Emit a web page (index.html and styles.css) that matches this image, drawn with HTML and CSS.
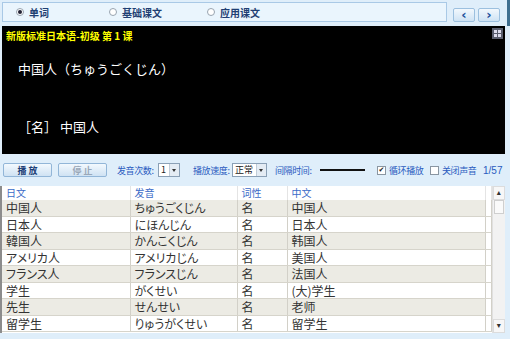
FILE: index.html
```html
<!DOCTYPE html>
<html lang="zh">
<head>
  <meta charset="UTF-8">
  <title>新版标准日本语 单词</title>
  <link rel="stylesheet" href="styles.css">
</head>
<body>
<div class="app">

  <!-- tabs + paging -->
  <div class="topbar">
    <div class="tabs">
      <label class="tab"><span class="radio on"></span>单词</label>
      <label class="tab"><span class="radio"></span>基础课文</label>
      <label class="tab"><span class="radio"></span>应用课文</label>
    </div>
    <div class="nav">
      <button class="navbtn">&lsaquo;</button>
      <button class="navbtn">&rsaquo;</button>
    </div>
  </div>

  <!-- black display -->
  <div class="screen">
    <div class="title">新版标准日本语-初级 第 1 课</div>
    <div class="word">中国人（ちゅうごくじん）</div>
    <div class="meaning">［名］ 中国人</div>
    <span class="fullscreen">
      <svg width="9" height="9" viewBox="0 0 9 9"><rect x="1" y="1" width="3" height="3" fill="#dde"/><rect x="5" y="1" width="3" height="3" fill="#dde"/><rect x="1" y="5" width="3" height="3" fill="#dde"/><rect x="5" y="5" width="3" height="3" fill="#dde"/></svg>
    </span>
  </div>

  <!-- playback controls -->
  <div class="controls">
    <button class="btn">播 放</button>
    <button class="btn off">停 止</button>
    <span class="lbl l-times">发音次数:</span>
    <span class="select w-times">1<i class="arrow"></i></span>
    <span class="lbl l-speed">播放速度:</span>
    <span class="select w-speed">正常<i class="arrow"></i></span>
    <span class="lbl l-gap">间隔时间:</span>
    <span class="slider"></span>
    <label class="check"><span class="box on">&#10004;</span>循环播放</label>
    <label class="check"><span class="box"></span>关闭声音</label>
    <span class="count">1/57</span>
  </div>

  <!-- word list -->
  <div class="grid">
    <table class="words">
      <colgroup>
        <col class="c-jp"><col class="c-kana"><col class="c-pos"><col class="c-cn"><col class="c-pad">
      </colgroup>
      <thead>
        <tr><th>日文</th><th>发音</th><th>词性</th><th>中文</th><th></th></tr>
      </thead>
      <tbody>
        <tr class="alt"><td>中国人</td><td class="jp">ちゅうごくじん</td><td>名</td><td>中国人</td><td></td></tr>
        <tr><td>日本人</td><td class="jp">にほんじん</td><td>名</td><td>日本人</td><td></td></tr>
        <tr class="alt"><td>韓国人</td><td class="jp">かんこくじん</td><td>名</td><td>韩国人</td><td></td></tr>
        <tr><td class="jp">アメリカ人</td><td class="jp">アメリカじん</td><td>名</td><td>美国人</td><td></td></tr>
        <tr class="alt"><td class="jp">フランス人</td><td class="jp">フランスじん</td><td>名</td><td>法国人</td><td></td></tr>
        <tr><td>学生</td><td class="jp">がくせい</td><td>名</td><td>(大)学生</td><td></td></tr>
        <tr class="alt"><td>先生</td><td class="jp">せんせい</td><td>名</td><td>老师</td><td></td></tr>
        <tr><td>留学生</td><td class="jp">りゅうがくせい</td><td>名</td><td>留学生</td><td></td></tr>
      </tbody>
    </table>
    <div class="scrollbar">
      <span class="sb-btn">&#9652;</span>
      <span class="sb-thumb"></span>
      <span class="sb-track"></span>
      <span class="sb-btn">&#9662;</span>
    </div>
  </div>

</div>
</body>
</html>
```

FILE: styles.css
```css
body {
  margin: 0;
  padding: 0;
  background-color: #dfeefa;
  font-family: "Noto Sans CJK SC", "Noto Sans", sans-serif;
  font-size: 11px;
  color: #222;
}

.app {
  width: 510px;
  height: 339px;
  overflow: hidden;
  display: flex;
  flex-direction: column;
}

/* top bar */
.topbar {
  display: flex;
  align-items: flex-start;
  height: 26px;
  border-right: 3px solid #3f6f8f;
}

.tabs {
  width: 443px;
  height: 18px;
  margin: 2px 0 0 2px;
  border: 1px solid #a9c9e6;
  background-color: #eaf5fd;
  display: flex;
  align-items: center;
}

.tab {
  display: flex;
  align-items: center;
  gap: 5px;
  color: #1f3f73;
  font-size: 10px;
  font-weight: bold;
  width: 98px;
  white-space: nowrap;
}

.tab:first-child {
  margin-left: 13px;
  width: 93px;
}

.radio {
  width: 6px;
  height: 6px;
  border-radius: 50%;
  border: 1px solid #98a4b0;
  background: #fff;
  position: relative;
}

.radio.on::after {
  content: "";
  position: absolute;
  left: 1px;
  top: 1px;
  width: 4px;
  height: 4px;
  border-radius: 50%;
  background: #223;
}

.nav {
  display: flex;
  gap: 3px;
  margin: 8px 0 0 6px;
}

.navbtn {
  width: 22px;
  height: 14px;
  padding: 0;
  border: 1px solid #9cc0df;
  border-radius: 2px;
  background: linear-gradient(#f2f8fd, #cfe3f4);
  color: #1b4f9a;
  font-size: 13px;
  font-weight: bold;
  line-height: 10px;
  font-family: "DejaVu Sans", sans-serif;
}

/* black display */
.screen {
  position: relative;
  height: 128px;
  margin: 0 5px 0 2px;
  background-color: #000;
  color: #fff;
  font-family: "Noto Sans CJK JP", sans-serif;
}

.title {
  color: #ffff00;
  font-size: 10px;
  font-weight: bold;
  padding: 3px 0 0 4px;
  line-height: 14px;
  font-family: "Noto Sans CJK SC", sans-serif;
}

.word {
  font-size: 13px;
  padding: 17px 0 0 16px;
  line-height: 18px;
}

.meaning {
  font-size: 13px;
  padding: 40px 0 0 16px;
  line-height: 18px;
}

.fullscreen {
  position: absolute;
  right: 2px;
  top: 2px;
  width: 11px;
  height: 11px;
  background: #5a5e6e;
  display: flex;
  align-items: center;
  justify-content: center;
}

/* controls row */
.controls {
  display: flex;
  align-items: center;
  height: 32px;
  padding: 0 0 0 3px;
  white-space: nowrap;
}

.controls > * {
  flex-shrink: 0;
}

.btn {
  width: 49px;
  height: 14px;
  padding: 0;
  margin-right: 6px;
  border: 1px solid #92b6d8;
  border-radius: 2px;
  background: linear-gradient(#f3f9fe, #cfe2f3);
  color: #1d3f77;
  font-family: "Noto Sans CJK SC", sans-serif;
  font-size: 9px;
  font-weight: bold;
  line-height: 11px;
}

.btn.off {
  color: #9aa8b8;
  margin-right: 0;
}

.lbl {
  color: #2a5bbf;
  font-size: 9px;
  letter-spacing: -0.4px;
}

.l-times { width: 38px; margin-left: 10px; }
.l-speed { width: 36px; margin-left: 13px; }
.l-gap { width: 40px; margin-left: 8px; }

.select {
  position: relative;
  height: 12px;
  margin-left: 3px;
  border: 1px solid #8aa0b6;
  background: #fff;
  font-size: 9px;
  line-height: 12px;
  padding-left: 2px;
}

.w-times { width: 18px; }
.w-speed { width: 31px; }

.arrow {
  position: absolute;
  right: 0;
  top: 0;
  width: 9px;
  height: 12px;
  background: #e4ecf4;
  border-left: 1px solid #c0ccd8;
}

.arrow::after {
  content: "";
  position: absolute;
  left: 2px;
  top: 5px;
  border: 2.5px solid transparent;
  border-top: 3px solid #333;
}

.slider {
  width: 45px;
  height: 2px;
  background: #111;
  margin: 0 12px 0 5px;
}

.check {
  display: flex;
  align-items: center;
  gap: 3px;
  width: 53px;
  color: #2a5bbf;
  font-size: 9px;
  letter-spacing: -0.4px;
}

.box {
  width: 7px;
  height: 7px;
  border: 1px solid #8a96a2;
  background: #fff;
  font-size: 7px;
  line-height: 7px;
  text-align: center;
  color: #222;
  letter-spacing: 0;
  font-family: "DejaVu Sans", sans-serif;
}

.count {
  color: #2a5bbf;
  font-size: 10px;
  font-family: "Liberation Sans", sans-serif;
}

/* word list */
.grid {
  display: flex;
  height: 147px;
  margin: 0 5px 0 0;
  border-left: 2px solid #8c8c8c;
  background: #fff;
}

.words {
  width: 489px;
  height: max-content;
  table-layout: fixed;
  border-collapse: collapse;
  font-size: 12px;
  color: #333;
}

.c-jp { width: 128px; }
.c-kana { width: 107px; }
.c-pos { width: 50px; }
.c-cn { width: 198px; }
.c-pad { width: 6px; }

.words th {
  height: 14px;
  padding: 0 0 0 4px;
  text-align: left;
  font-weight: normal;
  font-size: 10px;
  color: #3b6bc8;
  background: #fff;
  border-right: 1px solid #e4e4e4;
  line-height: 14px;
}

.words td {
  height: 15.5px;
  padding: 0 0 0 4px;
  line-height: 15px;
  border-right: 1px solid #d2d0c8;
  border-bottom: 1px solid #d6d4cb;
  white-space: nowrap;
  overflow: hidden;
}

.words td.jp {
  font-family: "Noto Sans CJK JP", sans-serif;
  font-feature-settings: "palt";
}

.words tr.alt td {
  background: #ecebe4;
}

.words td:last-child {
  background: #fff !important;
}

.scrollbar {
  width: 14px;
  display: flex;
  flex-direction: column;
  background: #f2f2f2;
  border-left: 1px solid #e0e0e0;
}

.sb-btn {
  height: 12px;
  font-size: 8px;
  line-height: 12px;
  text-align: center;
  color: #333;
  background: #f7f7f7;
  border: 1px solid #dcdcdc;
  font-family: "DejaVu Sans", sans-serif;
}

.sb-thumb {
  height: 12px;
  margin: 0 1px;
  background: #fafafa;
  border: 1px solid #cfcfcf;
}

.sb-track {
  flex: 1;
}
```
